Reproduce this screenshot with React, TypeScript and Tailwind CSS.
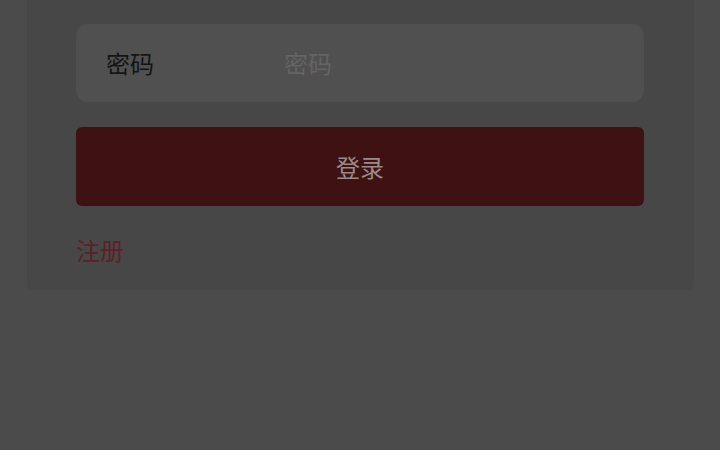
export default function App() {
  return (
    <div
      className="w-[720px] h-[450px] overflow-hidden bg-[#4b4b4b]"
      style={{ fontFamily: '"Noto Sans CJK SC", "Noto Sans", sans-serif' }}
    >
      <div className="ml-[27px] w-[667px] bg-[#474747] rounded-b-md pt-6 pb-[26px] pl-[49px] pr-[50px]">
        <div className="h-[78px] rounded-xl bg-[#505050] flex items-center pl-[30px]">
          <span className="w-[178px] text-2xl text-[#141414]">密码</span>
          <input
            type="password"
            placeholder="密码"
            className="flex-1 bg-transparent outline-none text-2xl placeholder:text-[#646464]"
          />
        </div>
        <button className="mt-[25px] w-[568px] h-[79px] rounded-md bg-[#3e1212] text-2xl text-[#9a8a8a] flex items-center justify-center">
          登录
        </button>
        <div className="mt-[30px] text-2xl text-[#5a2127] leading-[28px]">注册</div>
      </div>
    </div>
  )
}
